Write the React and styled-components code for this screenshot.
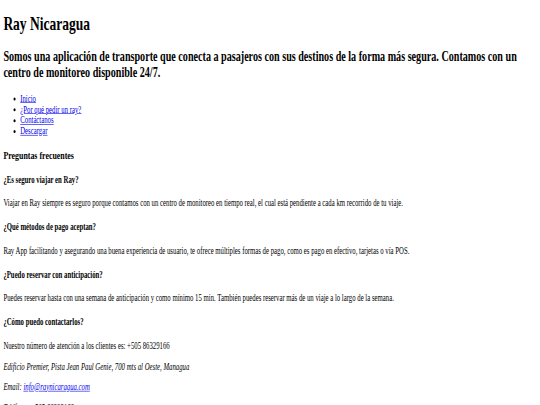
import styled, { createGlobalStyle } from "styled-components";

const GlobalStyle = createGlobalStyle`
  html,
  body {
    margin: 0;
    background: #ffffff;
    overflow: hidden;
  }
`;

// the page is laid out at desktop width and squeezed into the small window
const Page = styled.div`
  display: flow-root;
  width: 1280px;
  padding: 0 8px;
  box-sizing: border-box;
  font-family: "Liberation Serif", "Times New Roman", serif;
  font-size: 16px;
  color: #000000;
  transform: scale(0.421875, 0.605);
  transform-origin: 0 0;
`;

const Title = styled.h1`
  font-size: 32px;
  font-weight: bold;
  margin: 21.44px 0;
`;

const Lead = styled.h2`
  font-size: 24px;
  font-weight: bold;
  margin: 19.92px 0;
`;

const NavList = styled.ul`
  margin: 16px 0;
  padding-left: 40px;
  list-style: disc;
`;

const NavLink = styled.a`
  color: #0000ee;
  text-decoration: underline;
`;

const SectionTitle = styled.h3`
  font-size: 18.72px;
  font-weight: bold;
  margin: 18.72px 0;
`;

const Question = styled.h4`
  font-size: 16px;
  font-weight: bold;
  margin: 21.28px 0;
`;

const Answer = styled.p`
  margin: 16px 0;
  font-style: ${(p) => (p.$italic ? "italic" : "normal")};
`;

const faqs = [
  {
    q: "¿Es seguro viajar en Ray?",
    a: "Viajar en Ray siempre es seguro porque contamos con un centro de monitoreo en tiempo real, el cual está pendiente a cada km recorrido de tu viaje.",
  },
  {
    q: "¿Qué métodos de pago aceptan?",
    a: "Ray App facilitando y asegurando una buena experiencia de usuario, te ofrece múltiples formas de pago, como es pago en efectivo, tarjetas o vía POS.",
  },
  {
    q: "¿Puedo reservar con anticipación?",
    a: "Puedes reservar hasta con una semana de anticipación y como mínimo 15 min. También puedes reservar más de un viaje a lo largo de la semana.",
  },
];

const links = ["Inicio", "¿Por qué pedir un ray?", "Contáctanos", "Descargar"];

export default function App() {
  return (
    <>
      <GlobalStyle />
      <Page>
        <Title>Ray Nicaragua</Title>
        <Lead>
          Somos una aplicación de transporte que conecta a pasajeros con sus
          destinos de la forma más segura. Contamos con un centro de monitoreo
          disponible 24/7.
        </Lead>
        <NavList>
          {links.map((l) => (
            <li key={l}>
              <NavLink href="#">{l}</NavLink>
            </li>
          ))}
        </NavList>
        <SectionTitle>Preguntas frecuentes</SectionTitle>
        {faqs.map((f) => (
          <div key={f.q}>
            <Question>{f.q}</Question>
            <Answer>{f.a}</Answer>
          </div>
        ))}
        <Question>¿Cómo puedo contactarlos?</Question>
        <Answer>Nuestro número de atención a los clientes es: +505 86329166</Answer>
        <Answer $italic>
          Edificio Premier, Pista Jean Paul Genie, 700 mts al Oeste, Managua
        </Answer>
        <Answer $italic>
          Email: <NavLink href="#">info@raynicaragua.com</NavLink>
        </Answer>
        <Answer $italic>Teléfono: +505 86329166</Answer>
      </Page>
    </>
  );
}
